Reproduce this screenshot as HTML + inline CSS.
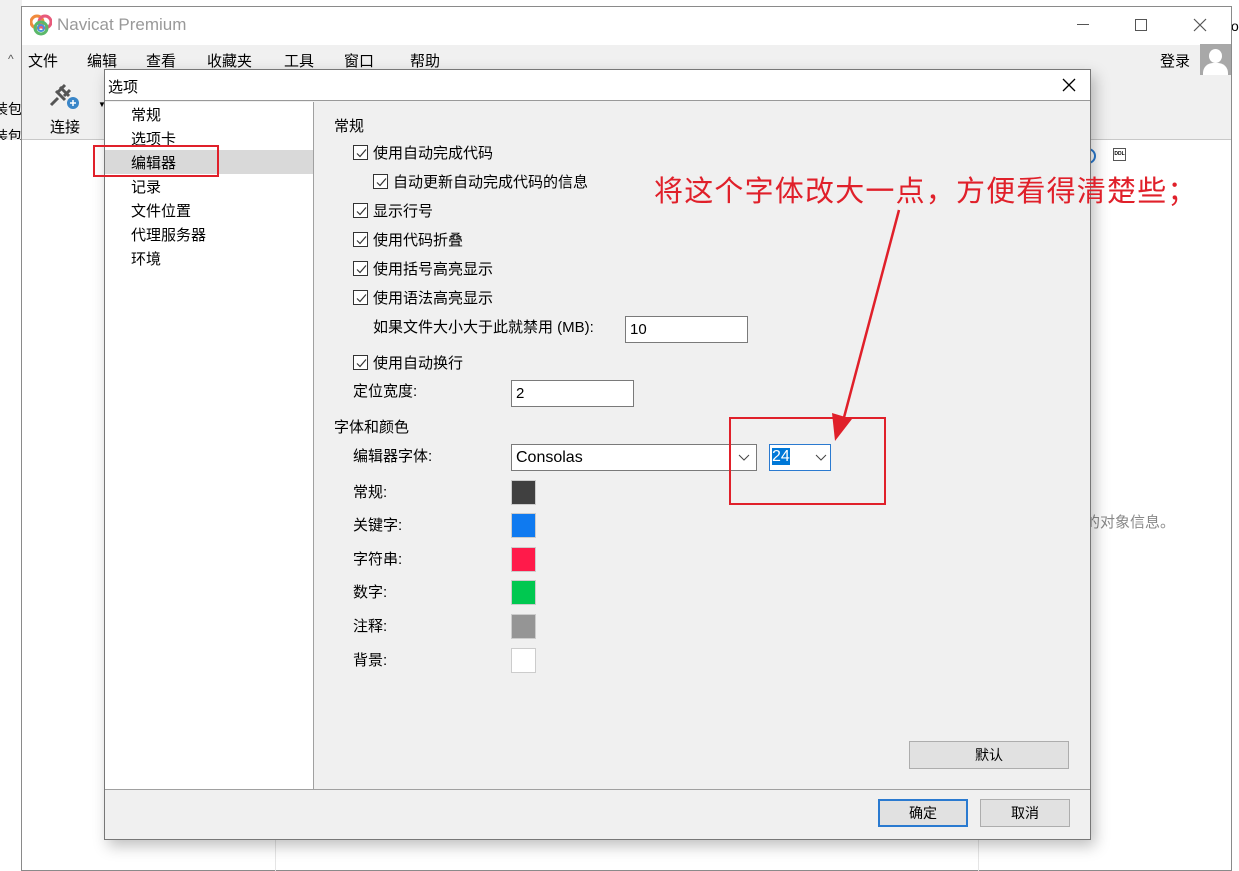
<!DOCTYPE html>
<html><head><meta charset="utf-8"><style>
*{margin:0;padding:0;box-sizing:border-box}
body{width:1239px;height:871px;overflow:hidden;background:#fff;position:relative;font-family:"Liberation Sans","Microsoft YaHei","Noto Sans CJK SC",sans-serif;font-size:14px;color:#000}
.a{position:absolute;white-space:nowrap}
.cb{position:absolute;width:15px;height:15px;border:1px solid #333;background:#fff}
.cb svg{position:absolute;left:1px;top:1px}
.inp{position:absolute;background:#fff;border:1px solid #7a7a7a;font-size:15px;padding:4px 0 0 4px}
.sw{position:absolute;left:511px;width:25px;height:25px;border:1px solid #ccc}
.btn{position:absolute;background:#e1e1e1;border:1px solid #adadad;text-align:center;font-size:14px;line-height:26px}
</style></head><body>
<div class="a" style="left:0;top:0;width:22px;height:871px;background:#f0f0f0"></div>
<div class="a" style="left:8px;top:52px;font-size:12px;color:#555">^</div>
<div class="a" style="left:-6px;top:99px;font-size:14px">装包</div>
<div class="a" style="left:-6px;top:126px;font-size:14px">装包</div>
<div class="a" style="left:0;top:140px;width:22px;height:731px;background:#fff"></div>
<div class="a" style="left:1231px;top:0;width:8px;height:871px;background:#fff"></div>
<div class="a" style="left:1231px;top:18px;font-size:14px">oc</div>
<div class="a" style="left:21px;top:6px;width:1211px;height:865px;border:1px solid #8a8a8a;background:#fff"></div>
<div class="a" style="left:22px;top:45px;width:1209px;height:95px;background:#f0f0f0;border-bottom:1px solid #c8c8c8"></div>
<svg class="a" style="left:30px;top:14px" width="22" height="22" viewBox="0 0 22 22"><circle cx="7" cy="8" r="6" fill="none" stroke="#f08a3c" stroke-width="3"/><circle cx="15" cy="8" r="6" fill="none" stroke="#e85a7a" stroke-width="3"/><circle cx="11" cy="14" r="6" fill="none" stroke="#5bb86a" stroke-width="3"/><circle cx="11" cy="14" r="3" fill="none" stroke="#4a90d9" stroke-width="2"/></svg>
<div class="a" style="left:57px;top:15px;font-size:17px;color:#999">Navicat Premium</div>
<div class="a" style="left:1077px;top:24px;width:12px;height:1px;background:#555"></div>
<div class="a" style="left:1135px;top:19px;width:12px;height:12px;border:1px solid #555"></div>
<svg class="a" style="left:1193px;top:18px" width="14" height="14"><path d="M1 1L13 13M13 1L1 13" stroke="#555" stroke-width="1.2"/></svg>
<div class="a" style="left:28px;top:50px;font-size:15px">文件</div>
<div class="a" style="left:87px;top:50px;font-size:15px">编辑</div>
<div class="a" style="left:146px;top:50px;font-size:15px">查看</div>
<div class="a" style="left:207px;top:50px;font-size:15px">收藏夹</div>
<div class="a" style="left:284px;top:50px;font-size:15px">工具</div>
<div class="a" style="left:344px;top:50px;font-size:15px">窗口</div>
<div class="a" style="left:410px;top:50px;font-size:15px">帮助</div>
<div class="a" style="left:1160px;top:50px;font-size:15px">登录</div>
<div class="a" style="left:1200px;top:44px;width:31px;height:31px;background:#a8a8a8;overflow:hidden"><div class="a" style="left:9px;top:5px;width:13px;height:14px;border-radius:50%;background:#fff"></div><div class="a" style="left:3px;top:19px;width:25px;height:16px;border-radius:10px 10px 0 0;background:#fff"></div></div>
<svg class="a" style="left:46px;top:80px" width="34" height="30"><path d="M5 25L12 18M10 11l9 9M14 7l9 9M12 12l7-7M18 16l6-6" stroke="#555" stroke-width="3"/><circle cx="27" cy="23" r="6" fill="#3a86c8"/><path d="M24 23h6M27 20v6" stroke="#fff" stroke-width="1.5"/></svg>
<div class="a" style="left:50px;top:116px;font-size:15px">连接</div>
<div class="a" style="left:98px;top:100px;font-size:8px">▼</div>
<div class="a" style="left:275px;top:140px;width:1px;height:731px;background:#e5e5e5"></div>
<div class="a" style="left:978px;top:140px;width:1px;height:731px;background:#e5e5e5"></div>
<div class="a" style="left:1113px;top:148px;width:13px;height:13px;border:1px solid #555;font-size:5px;line-height:11px;text-align:center;font-weight:bold">DDL</div>
<div class="a" style="left:1080px;top:148px;width:16px;height:16px;border:2px solid #2a7ad0;border-radius:50%"></div>
<div class="a" style="left:1085px;top:511px;font-size:15px;color:#888">的对象信息。</div>
<div class="a" style="left:104px;top:69px;width:987px;height:771px;box-shadow:4px 6px 14px rgba(0,0,0,.25)"></div>
<div class="a" style="left:104px;top:69px;width:987px;height:771px;border:1px solid #777;background:#f0f0f0"></div>
<div class="a" style="left:105px;top:70px;width:985px;height:31px;background:#fff;border-bottom:1px solid #999"></div>
<div class="a" style="left:108px;top:76px;font-size:15px">选项</div>
<svg class="a" style="left:1062px;top:78px" width="14" height="14"><path d="M1 1L13 13M13 1L1 13" stroke="#000" stroke-width="1.3"/></svg>
<div class="a" style="left:105px;top:102px;width:209px;height:687px;background:#fff;border-right:1px solid #a0a0a0"></div>
<div class="a" style="left:105px;top:150px;width:208px;height:24px;background:#d9d9d9"></div>
<div class="a" style="left:131px;top:104px;font-size:15px">常规</div>
<div class="a" style="left:131px;top:128px;font-size:15px">选项卡</div>
<div class="a" style="left:131px;top:152px;font-size:15px">编辑器</div>
<div class="a" style="left:131px;top:176px;font-size:15px">记录</div>
<div class="a" style="left:131px;top:200px;font-size:15px">文件位置</div>
<div class="a" style="left:131px;top:224px;font-size:15px">代理服务器</div>
<div class="a" style="left:131px;top:248px;font-size:15px">环境</div>
<div class="a" style="left:105px;top:789px;width:985px;height:1px;background:#a0a0a0"></div>
<div class="a" style="left:334px;top:115px;font-size:15px">常规</div>
<div class="cb" style="left:353px;top:145px"><svg width="13" height="13"><path d="M2 6.5l3 3 6-7" stroke="#333" fill="none" stroke-width="1.2"/></svg></div>
<div class="a" style="left:373px;top:142px;font-size:15px">使用自动完成代码</div>
<div class="cb" style="left:373px;top:174px"><svg width="13" height="13"><path d="M2 6.5l3 3 6-7" stroke="#333" fill="none" stroke-width="1.2"/></svg></div>
<div class="a" style="left:393px;top:171px;font-size:15px">自动更新自动完成代码的信息</div>
<div class="cb" style="left:353px;top:203px"><svg width="13" height="13"><path d="M2 6.5l3 3 6-7" stroke="#333" fill="none" stroke-width="1.2"/></svg></div>
<div class="a" style="left:373px;top:200px;font-size:15px">显示行号</div>
<div class="cb" style="left:353px;top:232px"><svg width="13" height="13"><path d="M2 6.5l3 3 6-7" stroke="#333" fill="none" stroke-width="1.2"/></svg></div>
<div class="a" style="left:373px;top:229px;font-size:15px">使用代码折叠</div>
<div class="cb" style="left:353px;top:261px"><svg width="13" height="13"><path d="M2 6.5l3 3 6-7" stroke="#333" fill="none" stroke-width="1.2"/></svg></div>
<div class="a" style="left:373px;top:258px;font-size:15px">使用括号高亮显示</div>
<div class="cb" style="left:353px;top:290px"><svg width="13" height="13"><path d="M2 6.5l3 3 6-7" stroke="#333" fill="none" stroke-width="1.2"/></svg></div>
<div class="a" style="left:373px;top:287px;font-size:15px">使用语法高亮显示</div>
<div class="a" style="left:373px;top:316px;font-size:15px">如果文件大小大于此就禁用 (MB):</div>
<div class="inp" style="left:625px;top:316px;width:123px;height:27px">10</div>
<div class="cb" style="left:353px;top:355px"><svg width="13" height="13"><path d="M2 6.5l3 3 6-7" stroke="#333" fill="none" stroke-width="1.2"/></svg></div>
<div class="a" style="left:373px;top:352px;font-size:15px">使用自动换行</div>
<div class="a" style="left:353px;top:380px;font-size:15px">定位宽度:</div>
<div class="inp" style="left:511px;top:380px;width:123px;height:27px">2</div>
<div class="a" style="left:334px;top:416px;font-size:15px">字体和颜色</div>
<div class="a" style="left:353px;top:445px;font-size:15px">编辑器字体:</div>
<div class="inp" style="left:511px;top:444px;width:246px;height:27px;font-size:16px">Consolas</div>
<svg class="a" style="left:738px;top:454px" width="12" height="8"><path d="M1 1l5 5 5-5" stroke="#444" fill="none"/></svg>
<div class="inp" style="left:769px;top:444px;width:62px;height:27px;border-color:#2a7ad0;padding:3px 0 0 2px"><span style="background:#0078d7;color:#fff;font-size:16px">24</span></div>
<svg class="a" style="left:815px;top:454px" width="12" height="8"><path d="M1 1l5 5 5-5" stroke="#444" fill="none"/></svg>
<div class="a" style="left:353px;top:481px;font-size:15px">常规:</div>
<div class="a" style="left:353px;top:514px;font-size:15px">关键字:</div>
<div class="a" style="left:353px;top:548px;font-size:15px">字符串:</div>
<div class="a" style="left:353px;top:581px;font-size:15px">数字:</div>
<div class="a" style="left:353px;top:615px;font-size:15px">注释:</div>
<div class="a" style="left:353px;top:649px;font-size:15px">背景:</div>
<div class="sw" style="top:480px;background:#404040"></div>
<div class="sw" style="top:513px;background:#0f7af0"></div>
<div class="sw" style="top:547px;background:#ff1a4a"></div>
<div class="sw" style="top:580px;background:#00c850"></div>
<div class="sw" style="top:614px;background:#959595"></div>
<div class="sw" style="top:648px;background:#fff"></div>
<div class="btn" style="left:909px;top:741px;width:160px;height:28px">默认</div>
<div class="btn" style="left:878px;top:799px;width:90px;height:28px;border:2px solid #2a7ad0;line-height:24px">确定</div>
<div class="btn" style="left:980px;top:799px;width:90px;height:28px">取消</div>
<div class="a" style="left:93px;top:145px;width:126px;height:32px;border:2px solid #e0202a"></div>
<div class="a" style="left:729px;top:417px;width:157px;height:88px;border:2px solid #e0202a"></div>
<div class="a" style="left:654px;top:168px;font-size:29px;letter-spacing:1.2px;color:#e0202a;font-family:'Liberation Sans','Noto Sans CJK SC',sans-serif">将这个字体改大一点，方便看得清楚些；</div>
<svg class="a" style="left:820px;top:205px" width="90" height="245"><path d="M79 5L22 220" stroke="#e0202a" stroke-width="2.5"/><path d="M15 236L12 208L32 214Z" fill="#e0202a"/></svg>
</body></html>
